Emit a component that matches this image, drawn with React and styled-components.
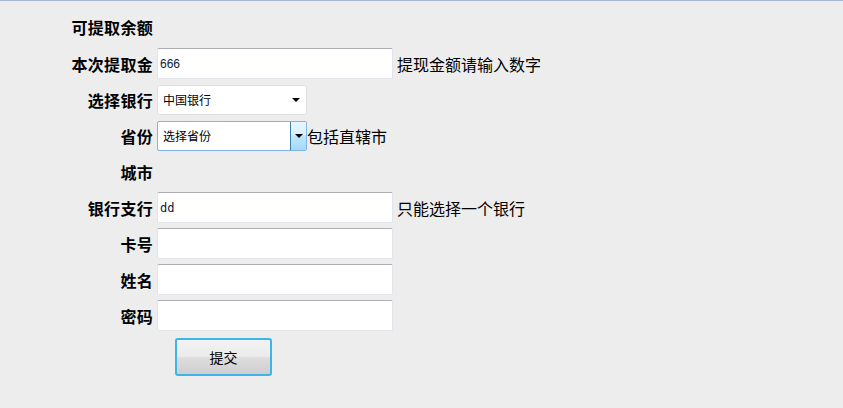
import styled, { createGlobalStyle } from "styled-components"

const GlobalStyle = createGlobalStyle`
    html, body {
        margin: 0;
        padding: 0;
        background: #ededed;
    }
    body {
        font-family: "Noto Sans CJK SC", "Liberation Sans", sans-serif;
        color: #000;
    }
`

export default function App() {
    return (
        <Page>
            <GlobalStyle />
            <Form>
                <Row $height={33}>
                    <Label>可提取余额</Label>
                </Row>
                <Row>
                    <Label>本次提取金</Label>
                    <TextInput defaultValue="666" />
                    <Hint>提现金额请输入数字</Hint>
                </Row>
                <Row>
                    <Label>选择银行</Label>
                    <SelectBox>
                        <SelectText>中国银行</SelectText>
                        <ArrowZone>
                            <Arrow />
                        </ArrowZone>
                    </SelectBox>
                </Row>
                <Row>
                    <Label>省份</Label>
                    <SelectBox $active>
                        <SelectText>选择省份</SelectText>
                        <ArrowZone $active>
                            <Arrow />
                        </ArrowZone>
                    </SelectBox>
                    <Hint $tight>包括直辖市</Hint>
                </Row>
                <Row>
                    <Label>城市</Label>
                </Row>
                <Row>
                    <Label>银行支行</Label>
                    <TextInput defaultValue="dd" $mono />
                    <Hint>只能选择一个银行</Hint>
                </Row>
                <Row>
                    <Label>卡号</Label>
                    <TextInput />
                </Row>
                <Row>
                    <Label>姓名</Label>
                    <TextInput />
                </Row>
                <Row>
                    <Label>密码</Label>
                    <TextInput type="password" />
                </Row>
                <Row $height={40}>
                    <Label />
                    <SubmitButton>提交</SubmitButton>
                </Row>
            </Form>
        </Page>
    )
}

const Page = styled.div`
    min-height: 100vh;
    box-sizing: border-box;
    border-top: 1px solid #a7bad3;
    background: #ededed;
`

const Form = styled.div`
    display: flex;
    flex-direction: column;
    gap: 5px;
    padding-top: 9px;
`

const Row = styled.div`
    display: flex;
    align-items: center;
    height: ${(p) => p.$height || 31}px;
`

const Label = styled.div`
    width: 157px;
    flex-shrink: 0;
    padding-right: 4px;
    box-sizing: border-box;
    text-align: right;
    font-size: 16px;
    font-weight: 700;
    line-height: 20px;
    letter-spacing: 0.3px;
`

const TextInput = styled.input`
    width: 236px;
    height: 31px;
    box-sizing: border-box;
    margin: 0;
    padding: 0 2px;
    border: 1px solid #e3e4ea;
    border-top-color: #adaeb3;
    border-radius: 2px;
    background: #fff;
    outline: none;
    font-family: ${(p) => (p.$mono ? '"DejaVu Sans Mono", monospace' : '"Liberation Sans", sans-serif')};
    font-size: 12px;
    color: #0a1a3a;
`

const Hint = styled.span`
    margin-left: ${(p) => (p.$tight ? 0 : 4)}px;
    font-size: 16px;
    line-height: 20px;
`

const SelectBox = styled.div`
    display: flex;
    align-items: stretch;
    width: 150px;
    height: 30px;
    box-sizing: border-box;
    border: 1px solid ${(p) => (p.$active ? "#7eb4ea" : "#e0e0e0")};
    border-radius: 2px;
    background: #fff;
`

const SelectText = styled.div`
    flex: 1;
    display: flex;
    align-items: center;
    padding-left: 5px;
    font-size: 12px;
`

const ArrowZone = styled.div`
    width: 15px;
    display: flex;
    align-items: center;
    justify-content: center;
    margin-right: ${(p) => (p.$active ? 0 : 3)}px;
    border-left: 1px solid ${(p) => (p.$active ? "#3c7fb1" : "transparent")};
    background: ${(p) => (p.$active ? "linear-gradient(#eaf6fd, #d9f0fc 45%, #bee6fd 50%, #a7d9f5)" : "transparent")};
`

const Arrow = styled.div`
    width: 0;
    height: 0;
    border-left: 4px solid transparent;
    border-right: 4px solid transparent;
    border-top: 4px solid #000;
    margin-top: 1px;
`

const SubmitButton = styled.button`
    margin: 2px 0 0 18px;
    width: 97px;
    height: 38px;
    box-sizing: border-box;
    border: 2px solid #3cb5e8;
    border-radius: 3px;
    background: linear-gradient(#f3f3f3, #ebebeb 48%, #dddddd 52%, #cfcfcf);
    font-family: "Noto Sans CJK SC", sans-serif;
    font-size: 14px;
    color: #000;
    cursor: pointer;
`
